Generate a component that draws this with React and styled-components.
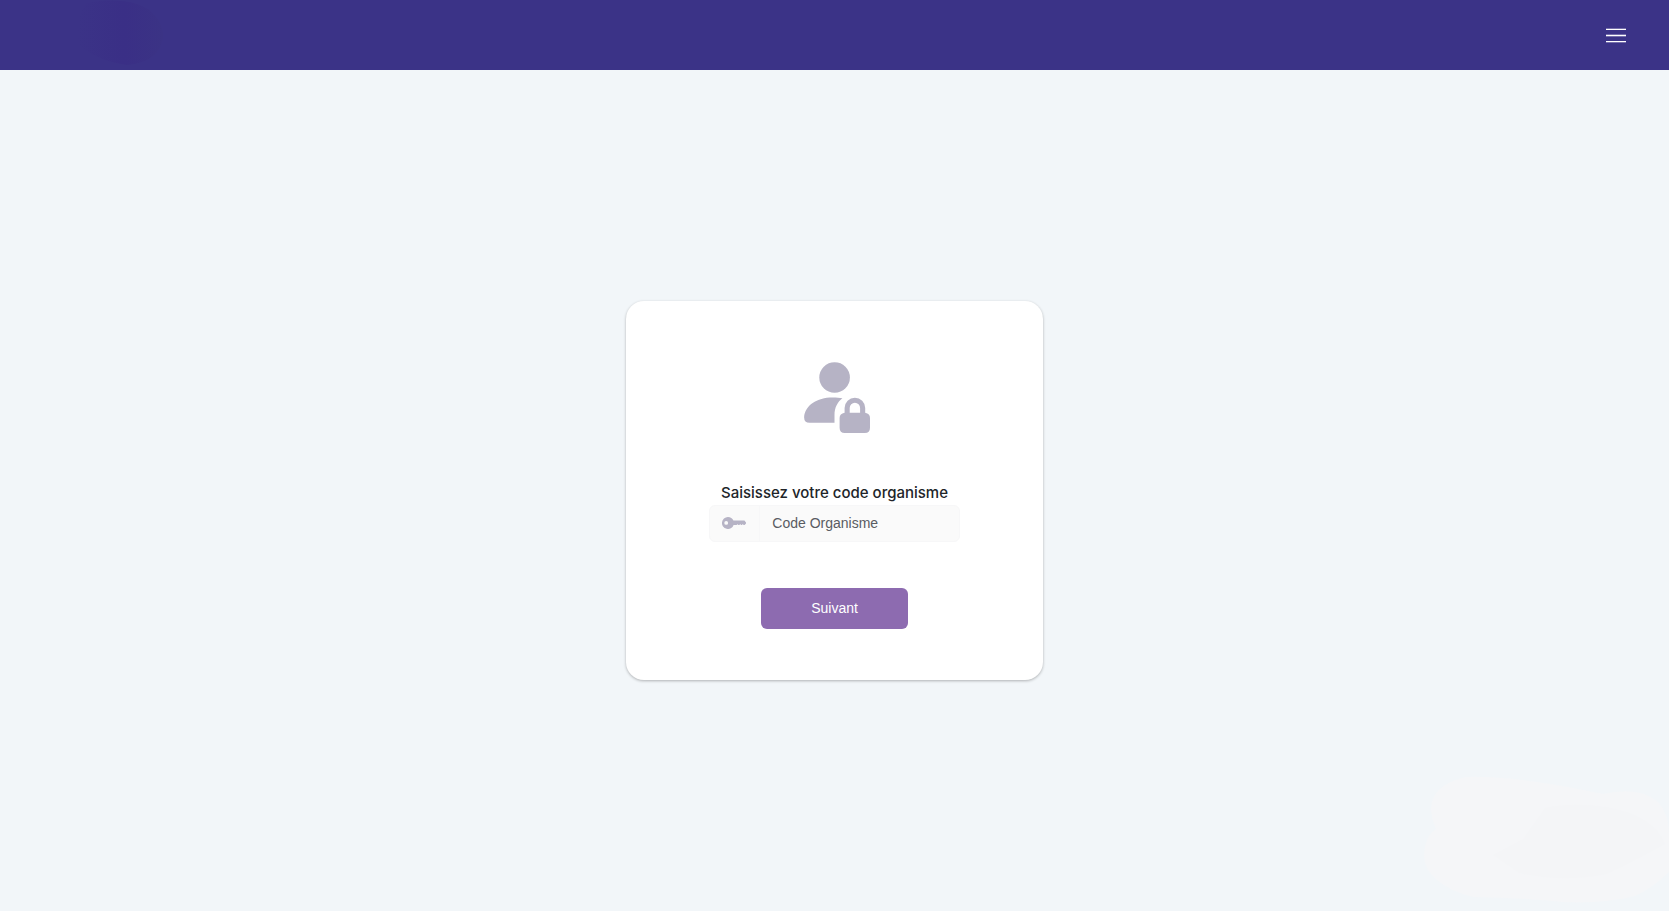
import React, { useState } from "react";
import styled, { createGlobalStyle } from "styled-components";

const GlobalStyle = createGlobalStyle`
  * {
    box-sizing: border-box;
  }
  body {
    margin: 0;
    background-color: #f2f6f9;
    font-family: Inter, "Liberation Sans", sans-serif;
  }
`;

const Page = styled.div`
  min-height: 100vh;
  display: flex;
  flex-direction: column;
  position: relative;
  overflow: hidden;
`;

const Header = styled.header`
  height: 70px;
  display: flex;
  align-items: center;
  justify-content: space-between;
  padding: 0 40px 0 76px;
  background-color: #3b3387;
`;

const LogoShade = styled.svg`
  width: 90px;
  height: 70px;
`;

const MenuButton = styled.button`
  display: flex;
  padding: 0;
  border: none;
  background: none;
  color: #fff;
  cursor: pointer;
`;

const Main = styled.main`
  flex: 1;
  display: flex;
  align-items: center;
  justify-content: center;
`;

const Card = styled.form`
  width: 25%;
  min-width: 320px;
  display: flex;
  flex-direction: column;
  align-items: center;
  padding: 56px 0 51px;
  border-radius: 18px;
  background-color: #fff;
  box-shadow: 0 1px 3px rgba(0, 0, 0, 0.28);
  z-index: 1;
`;

const Label = styled.label`
  margin-top: 44px;
  font-size: 15px;
  font-weight: 500;
  line-height: 24px;
  color: #212529;
`;

const InputGroup = styled.div`
  width: 60%;
  height: 37px;
  display: flex;
  border: 1px solid #f7f7f8;
  border-radius: 6px;
  background-color: #fafafa;
  overflow: hidden;
`;

const InputIcon = styled.span`
  width: 50px;
  display: flex;
  flex-shrink: 0;
  align-items: center;
  padding: 0 0 2px 12px;
  border-right: 1px solid #f7f7f8;
`;

const Input = styled.input`
  flex: 1;
  min-width: 0;
  padding: 0 12px 2px;
  border: none;
  outline: none;
  background: transparent;
  font-family: "Liberation Sans", Arial, sans-serif;
  font-size: 14px;
  color: #212529;
  &::placeholder {
    color: #595c62;
    opacity: 1;
  }
`;

const SubmitButton = styled.button`
  width: 147px;
  height: 41px;
  margin-top: 46px;
  padding: 0 0 2px;
  border: none;
  border-radius: 6px;
  background-color: #8d6bb0;
  font-family: "Liberation Sans", Arial, sans-serif;
  font-size: 14px;
  color: #fff;
  cursor: pointer;
`;

const Blob = styled.svg`
  width: 246px;
  height: 135px;
  position: absolute;
  right: 0;
  bottom: 0;
`;

const UserLockIcon = () => (
  <svg width="80" height="80" viewBox="0 0 80 80" fill="#b6b3c5" aria-hidden="true">
    <circle cx="39.6" cy="20.5" r="15.3" />
    <path d="M39.5 65.7H14.6Q9.1 65.7 9.1 60.2C10.1 48.5 21.6 40.5 37.6 40.5C41.6 40.5 44.6 40.8 47.4 41.3C42.6 45 39.5 50.5 39.5 58Z" />
    <path
      fillRule="evenodd"
      d="M49.6 55.7V51A10.3 10.3 0 0 1 70.2 51V55.7Q75 56.5 75 61V70.8Q75 76 69.8 76H49.8Q44.6 76 44.6 70.8V61Q44.6 56.5 49.6 55.7ZM54.7 55.7H65.1V51A5.2 5.2 0 0 0 54.7 51Z"
    />
  </svg>
);

const KeyIcon = () => (
  <svg width="24" height="12" viewBox="0 0 24 12" aria-hidden="true">
    <path
      fill="#b6b3c5"
      fillRule="evenodd"
      d="M6 0A6 6 0 0 1 11.4 3.6H22.4L24 5.4V6.4L22.6 8H21.6L20.8 7L20 8H19L18.2 7L17.4 8H16.4L15.6 7.2L14.6 8H11.6A6 6 0 1 1 6 0ZM4.2 4A1.9 1.9 0 1 0 4.2 7.8A1.9 1.9 0 1 0 4.2 4Z"
    />
  </svg>
);

const MenuIcon = () => (
  <svg width="23" height="20" viewBox="0 0 23 20" fill="none" stroke="currentColor" aria-hidden="true">
    <path d="M0 4.5H20M0 10.5H20M0 16.5H20" />
    <path d="M0 3.5H20M0 9.5H20M0 11.5H20M0 17.5H20" strokeOpacity="0.3" />
  </svg>
);

export default function App() {
  const [code, setCode] = useState("");

  return (
    <Page>
      <GlobalStyle />
      <Header>
        <LogoShade viewBox="0 0 90 70" aria-hidden="true">
          <defs>
            <linearGradient id="shade">
              <stop offset="0" stopColor="#3b3387" />
              <stop offset="0.55" stopColor="#3a2f86" />
              <stop offset="1" stopColor="#3b3385" />
            </linearGradient>
          </defs>
          <path d="M10 3Q50 -4 72 9Q88 22 87 38Q83 62 51 65Q17 60 2 43Q-1 20 10 3Z" fill="url(#shade)" />
        </LogoShade>
        <MenuButton type="button" aria-label="Menu">
          <MenuIcon />
        </MenuButton>
      </Header>

      <Main>
        <Card onSubmit={(e) => e.preventDefault()}>
          <UserLockIcon />
          <Label htmlFor="code">Saisissez votre code organisme</Label>
          <InputGroup>
            <InputIcon>
              <KeyIcon />
            </InputIcon>
            <Input
              id="code"
              type="text"
              placeholder="Code Organisme"
              value={code}
              onChange={(e) => setCode(e.target.value)}
            />
          </InputGroup>
          <SubmitButton type="submit">Suivant</SubmitButton>
        </Card>
      </Main>

      <Blob viewBox="0 0 246 135" aria-hidden="true">
        <path
          d="M43 1Q90 -1 180 18Q216 10 235 26Q246 38 246 58V96Q230 112 212 120Q180 128 140 126Q100 122 50 121Q2 108 1 79Q2 60 13 53Q-5 12 43 1Z"
          fill="#f5f6f8"
        />
        <path d="M122 32Q150 26 184 31Q232 40 242 68Q225 78 184 98Q140 107 96 97L70 79L100 63Z" fill="#f4f5f7" />
      </Blob>
    </Page>
  );
}
